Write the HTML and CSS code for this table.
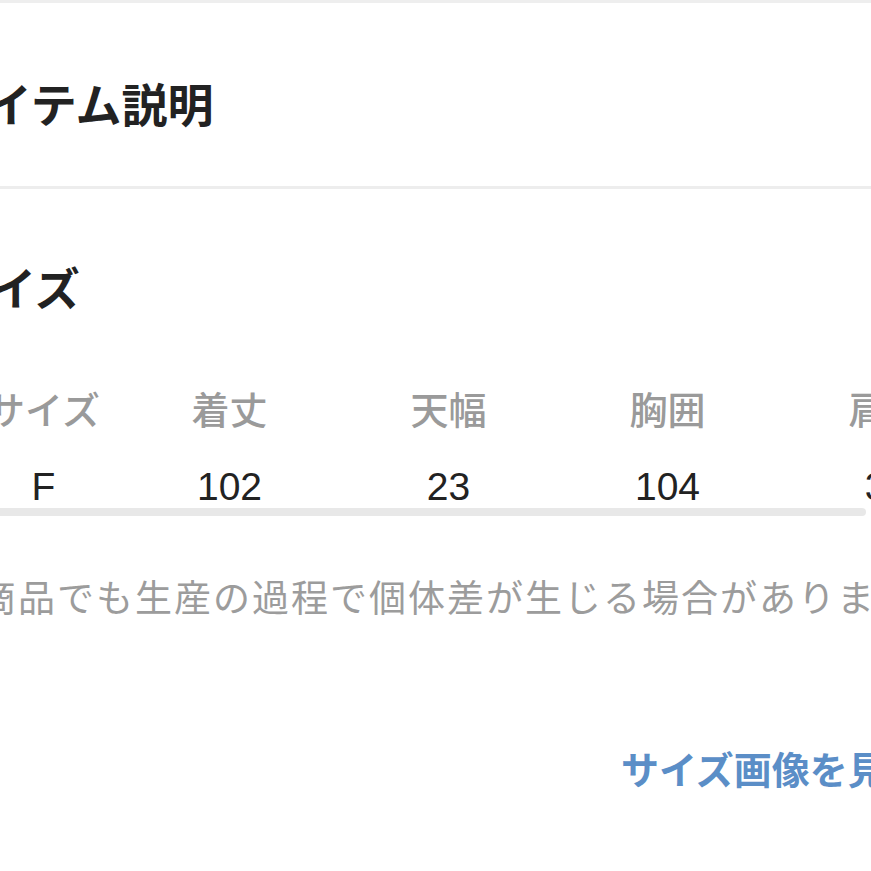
FILE: index.html
```html
<!DOCTYPE html>
<html lang="ja">
<head>
<meta charset="utf-8">
<title>アイテム説明</title>
<link rel="stylesheet" href="styles.css">
</head>
<body>
<div class="topbar"></div>
<div class="page">
  <section class="section-title">
    <h1 class="title">アイテム説明</h1>
  </section>
  <div class="divider"></div>
  <section class="size-section">
    <h2 class="heading">サイズ</h2>
    <div class="size-table">
      <div class="th">サイズ</div>
      <div class="th">着丈</div>
      <div class="th">天幅</div>
      <div class="th">胸囲</div>
      <div class="th">肩幅</div>
      <div class="td">F</div>
      <div class="td">102</div>
      <div class="td">23</div>
      <div class="td">104</div>
      <div class="td">38</div>
    </div>
    <div class="scrollbar"></div>
    <p class="note">商品でも生産の過程で個体差が生じる場合があります。</p>
    <a class="link">サイズ画像を見る</a>
  </section>
</div>
</body>
</html>
```

FILE: styles.css
```css
html, body {
  margin: 0;
  padding: 0;
  background: #ffffff;
  overflow: hidden;
}
body {
  width: 871px;
  height: 871px;
  font-family: "Noto Sans CJK JP", sans-serif;
  color: #222222;
}
.topbar {
  height: 3px;
  background: #eeeeee;
}
.page {
  margin-left: -58px;
}
.section-title {
  padding-top: 76px;
  padding-bottom: 61px;
}
.title {
  margin: 0;
  font-size: 46px;
  line-height: 46px;
  font-weight: 700;
  white-space: nowrap;
}
.divider {
  height: 3px;
  background: #ededed;
  margin-left: -10px;
}
.size-section {
  padding-top: 75px;
}
.heading {
  margin: 0 0 0 4px;
  font-size: 45px;
  line-height: 45px;
  font-weight: 700;
  white-space: nowrap;
}
.size-table {
  display: grid;
  grid-template-columns: 153px repeat(4, 219px);
  margin-left: 25px;
  margin-top: 80px;
  row-gap: 40px;
  white-space: nowrap;
}
.th {
  text-align: center;
  font-size: 38px;
  line-height: 38px;
  font-weight: 500;
  color: #9a9a9a;
}
.td {
  text-align: center;
  font-family: "Liberation Sans", "Noto Sans CJK JP", sans-serif;
  font-size: 39px;
  line-height: 39px;
  color: #222222;
}
.scrollbar {
  height: 8px;
  margin-top: 2px;
  margin-right: 5px;
  background: #e8e8e8;
  border-radius: 4px;
}
.note {
  margin: 62px 0 0 37px;
  font-size: 37px;
  line-height: 37px;
  letter-spacing: 2px;
  color: #9c9c9c;
  white-space: nowrap;
}
.link {
  display: block;
  margin: 134px 0 0 679px;
  font-size: 38px;
  line-height: 38px;
  font-weight: 700;
  color: #5b8ec7;
  white-space: nowrap;
  text-decoration: none;
}
```
